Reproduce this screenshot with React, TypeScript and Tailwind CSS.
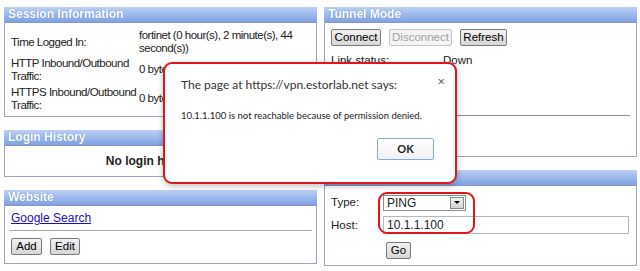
import React from "react";

const Panel = ({
  title,
  bodyClass,
  children,
}: {
  title: string;
  bodyClass: string;
  children?: React.ReactNode;
}) => (
  <div className="flex flex-col">
    <div className="h-[15px] bg-gradient-to-b from-[#bcd0f3] to-[#7fa2e4] pl-[4px] text-[12px] leading-[15px] font-bold text-white [text-shadow:0_0_1px_#4a6fb8]">
      {title}
    </div>
    <div className={`overflow-hidden border border-[#9ea3c6] border-t-[#8b93c0] ${bodyClass}`}>{children}</div>
  </div>
);

const Btn = ({
  label,
  w,
  disabled,
}: {
  label: string;
  w: string;
  disabled?: boolean;
}) => (
  <button
    className={`${w} h-[17px] rounded-[2px] border text-[11.5px] leading-[15px] ${
      disabled
        ? "border-[#c4c4c4] bg-[#f4f4f4] text-[#a0a0a0]"
        : "border-[#7a7a7a] bg-gradient-to-b from-[#f2f2f2] to-[#d6d6d6] text-black"
    }`}
  >
    {label}
  </button>
);

export default function App() {
  return (
    <div className="relative h-[271px] w-[640px] overflow-hidden bg-white font-['Liberation_Sans',Arial,sans-serif] text-[11px] text-[#222]">
      <div className="flex gap-[7px] pl-[4px] pt-[7px]">
        {/* left column */}
        <div className="flex w-[313px] flex-col gap-[13px]">
          <Panel title="Session Information" bodyClass="h-[95px] pl-[6px] pt-[6px]">
            <div className="grid grid-cols-[128px_1fr] gap-y-[1px] text-[11.5px] leading-[13px] tracking-[-0.5px]">
              <div className="self-center">Time Logged In:</div>
              <div>
                fortinet (0 hour(s), 2 minute(s), 44
                <br />
                second(s))
              </div>
              <div className="whitespace-nowrap pt-[1px]">
                HTTP Inbound/Outbound
                <br />
                Traffic:
              </div>
              <div className="self-center">0 bytes/0 bytes</div>
              <div className="whitespace-nowrap pt-[2px]">
                HTTPS Inbound/Outbound
                <br />
                Traffic:
              </div>
              <div className="self-center">0 bytes/0 bytes</div>
            </div>
          </Panel>
          <Panel title="Login History" bodyClass="h-[32px] flex items-center justify-center pr-[18px] text-[12px] font-bold">
            No login history
          </Panel>
          <Panel title="Website" bodyClass="h-[59px] px-[4px] pt-[3px]">
            <a className="pl-[2px] text-[12px] text-[#1a0dcc] underline">Google Search</a>
            <div className="mt-[3px] h-px bg-[#aea49a]" />
            <div className="mt-[7px] flex gap-[8px] pl-[2px]">
              <Btn label="Add" w="w-[31px]" />
              <Btn label="Edit" w="w-[30px]" />
            </div>
          </Panel>
        </div>

        {/* right column */}
        <div className="flex w-[313px] flex-col gap-[13px]">
          <Panel title="Tunnel Mode" bodyClass="h-[135px] px-[6px] pt-[6px]">
            <div className="flex gap-[8px]">
              <Btn label="Connect" w="w-[50px]" />
              <Btn label="Disconnect" w="w-[63px]" disabled />
              <Btn label="Refresh" w="w-[47px]" />
            </div>
            <div className="mt-[6px] flex text-[11.5px]">
              <span className="w-[112px]">Link status:</span>
              <span>Down</span>
            </div>
            <div className="mt-[46px] h-px bg-[#8f8f8f]" />
          </Panel>
          <Panel title="Connection Tool" bodyClass="h-[81px] pl-[6px] pt-[8px] text-[11.5px]">
            <div className="flex items-center">
              <span className="w-[52px]">Type:</span>
              <div className="flex h-[16px] w-[83px] items-center border border-[#8e8e8e] bg-white pl-[3px] text-[12px]">
                <span className="flex-1">PING</span>
                <span className="mr-[1px] flex h-[12px] w-[14px] items-center justify-center border border-[#888] bg-gradient-to-b from-[#f4f4f4] to-[#d2d2d2]">
                  <span className="h-0 w-0 border-x-[3px] border-t-[3px] border-x-transparent border-t-black" />
                </span>
              </div>
            </div>
            <div className="mt-[5px] flex items-center">
              <span className="w-[52px]">Host:</span>
              <div className="flex h-[18px] w-[246px] items-center border border-[#b8b8b8] bg-white pl-[3px] text-[12px]">
                10.1.1.100
              </div>
            </div>
            <div className="mt-[8px] pl-[55px]">
              <Btn label="Go" w="w-[25px]" />
            </div>
          </Panel>
        </div>
      </div>

      {/* annotation around type / host */}
      <div className="absolute left-[378px] top-[192px] h-[42px] w-[97px] rounded-[9px] border-2 border-[#e0161e]" />

      {/* alert dialog */}
      <div className="absolute left-[163px] top-[62px] h-[122px] w-[294px] rounded-[9px] border-2 border-[#e0161e] bg-white font-['Lato',sans-serif] shadow-[0_2px_6px_rgba(0,0,0,0.25)]">
        <div className="flex items-start justify-between pl-[16px] pr-[10px] pt-[12px]">
          <span className="text-[12px] leading-[18px] text-[#333]">
            The page at https://vpn.estorlab.net says:
          </span>
          <span className="-mt-[2px] font-['Noto_Sans',sans-serif] text-[13px] leading-[14px] text-[#666]">×</span>
        </div>
        <div className="mt-[15px] pl-[16px] text-[9.5px] leading-[14px] text-[#222]">
          10.1.1.100 is not reachable because of permission denied.
        </div>
        <div className="mt-[15px] flex justify-end pr-[21px]">
          <button className="h-[22px] w-[57px] rounded-[2px] border border-[#86a9dc] bg-gradient-to-b from-white to-[#f1f1f1] text-[11px] font-bold text-[#222]">
            OK
          </button>
        </div>
      </div>
    </div>
  );
}
